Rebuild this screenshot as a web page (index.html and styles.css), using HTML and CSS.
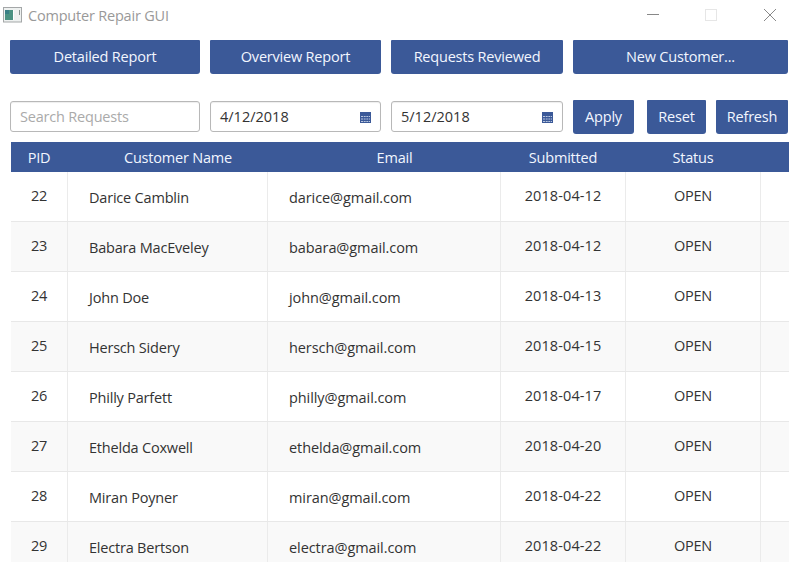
FILE: index.html
```
<!DOCTYPE html>
<html lang="en">
<head>
<meta charset="utf-8">
<title>Computer Repair GUI</title>
<link rel="stylesheet" href="styles.css">
</head>
<body>
<header class="titlebar">
  <svg class="app-icon" width="19" height="16" viewBox="0 0 19 16"><rect x=".5" y=".5" width="18" height="14.500" fill="#eef1f0" stroke="#a4a7a8"/><rect x="2" y="3" width="8" height="10" fill="#4b9282"/><path d="M2 3h4v4H2z" fill="#397f85"/><path d="M10.500 3v10" stroke="#fff"/><path d="M16.500 3v5" stroke="#879491"/></svg>
  <span class="title">Computer Repair GUI</span>
  <svg class="controls" width="140" height="16" viewBox="0 0 140 16"><path d="M7 7.500h12" stroke="#888"/><rect x="65.500" y="2.500" width="11" height="11" fill="none" stroke="#e6e6e6"/><path d="M124 2l12 12M136 2l-12 12" stroke="#888" fill="none"/></svg>
</header>
<nav class="reports">
  <button class="btn">Detailed Report</button>
  <button class="btn">Overview Report</button>
  <button class="btn">Requests Reviewed</button>
  <button class="btn">New Customer...</button>
</nav>
<section class="filters">
  <div class="field search">Search Requests</div>
  <div class="field date"><span class="value">4/12/2018</span><svg width="11" height="11" viewBox="0 0 11 11"><path d="M0 0h11v11H0z" fill="#3b5998"/><path d="M1 4h9v1H1zM1 6.500h9v1H1zM1 9h9v1H1z" fill="#b9c6df"/><path d="M3.500 3v8M6 3v8M8.500 3v8" stroke="#3b5998" stroke-width=".7"/></svg></div>
  <div class="field date"><span class="value">5/12/2018</span><svg width="11" height="11" viewBox="0 0 11 11"><path d="M0 0h11v11H0z" fill="#3b5998"/><path d="M1 4h9v1H1zM1 6.500h9v1H1zM1 9h9v1H1z" fill="#b9c6df"/><path d="M3.500 3v8M6 3v8M8.500 3v8" stroke="#3b5998" stroke-width=".7"/></svg></div>
  <button class="btn apply">Apply</button>
  <button class="btn reset">Reset</button>
  <button class="btn refresh">Refresh</button>
</section>
<main class="table">
  <div class="row head"><span>PID</span><span class="left">Customer Name</span><span class="left">Email</span><span>Submitted</span><span>Status</span><span></span></div>
  <div class="row"><span>22</span><span class="left">Darice Camblin</span><span class="left mail">darice@gmail.com</span><span class="day">2018-04-12</span><span class="open">OPEN</span><span></span></div>
  <div class="row"><span>23</span><span class="left">Babara MacEveley</span><span class="left mail">babara@gmail.com</span><span class="day">2018-04-12</span><span class="open">OPEN</span><span></span></div>
  <div class="row"><span>24</span><span class="left">John Doe</span><span class="left mail">john@gmail.com</span><span class="day">2018-04-13</span><span class="open">OPEN</span><span></span></div>
  <div class="row"><span>25</span><span class="left">Hersch Sidery</span><span class="left mail">hersch@gmail.com</span><span class="day">2018-04-15</span><span class="open">OPEN</span><span></span></div>
  <div class="row"><span>26</span><span class="left">Philly Parfett</span><span class="left mail">philly@gmail.com</span><span class="day">2018-04-17</span><span class="open">OPEN</span><span></span></div>
  <div class="row"><span>27</span><span class="left">Ethelda Coxwell</span><span class="left mail">ethelda@gmail.com</span><span class="day">2018-04-20</span><span class="open">OPEN</span><span></span></div>
  <div class="row"><span>28</span><span class="left">Miran Poyner</span><span class="left mail">miran@gmail.com</span><span class="day">2018-04-22</span><span class="open">OPEN</span><span></span></div>
  <div class="row"><span>29</span><span class="left">Electra Bertson</span><span class="left mail">electra@gmail.com</span><span class="day">2018-04-22</span><span class="open">OPEN</span><span></span></div>
</main>
</body>
</html>
```
FILE: styles.css
```
* { box-sizing: border-box; }
body {
  margin: 0;
  height: 562px;
  overflow: hidden;
  background: #fff;
  color: #333;
  font: 14.5px/20px "Open Sans", "Noto Sans", sans-serif;
  letter-spacing: -0.2px;
}
.titlebar {
  display: flex;
  align-items: center;
  height: 30px;
  padding: 0 16px 0 3px;
  color: #999;
}
.title { margin-left: 6px; margin-top: 1px; }
.controls { margin-left: auto; margin-right: 4px; }
.reports {
  display: grid;
  grid-template-columns: 190px 171px 172px 215px;
  gap: 10px;
  padding: 10px 10px 0;
}
.btn {
  height: 34px;
  padding: 0;
  border: 0;
  border-radius: 1px 1px 3px 3px;
  background: #3b5998;
  color: #f2f6ff;
  font: inherit;
  letter-spacing: inherit;
  white-space: nowrap;
}
.filters {
  display: grid;
  grid-template-columns: 190px 171px 172px 61px 62px 72px;
  column-gap: 10px;
  align-items: start;
  margin-top: 26px;
  padding: 0 10px;
}
.reset { margin-left: 3px; }
.field {
  display: flex;
  align-items: center;
  height: 31px;
  margin-top: 1px;
  padding: 0 9px;
  border: 1px solid #b8b8b8;
  border-radius: 3px;
  box-shadow: inset 0 1px 1px #eee;
}
.search { color: #aaa; }
.date { justify-content: space-between; }
.date svg { margin-top: 2px; }
.value { letter-spacing: 0; }
.table { width: 778px; margin: 8px 0 0 11px; }
.row {
  display: grid;
  grid-template-columns: 57px 200px 233px 125px 135px 28px;
  height: 50px;
  border-bottom: 1px solid #e8e8e8;
  text-align: center;
}
.row > span { padding-top: 14px; border-right: 1px solid #ebebeb; white-space: nowrap; }
.row > span:last-child { border-right: 0; }
.row:nth-child(odd) { background: #f9f9f9; }
.row > .left { padding: 16px 0 0 21px; text-align: left; }
.row > .mail { letter-spacing: -0.08px; }
.row > .day { letter-spacing: 0.1px; }
.row.head { height: 30px; border: 0; background: #3b5998; color: #f2f6ff; }
.row.head > span { padding-top: 6px; border-color: transparent; }
.row.head > .left { padding: 6px 0 0 21px; text-align: center; }
```
